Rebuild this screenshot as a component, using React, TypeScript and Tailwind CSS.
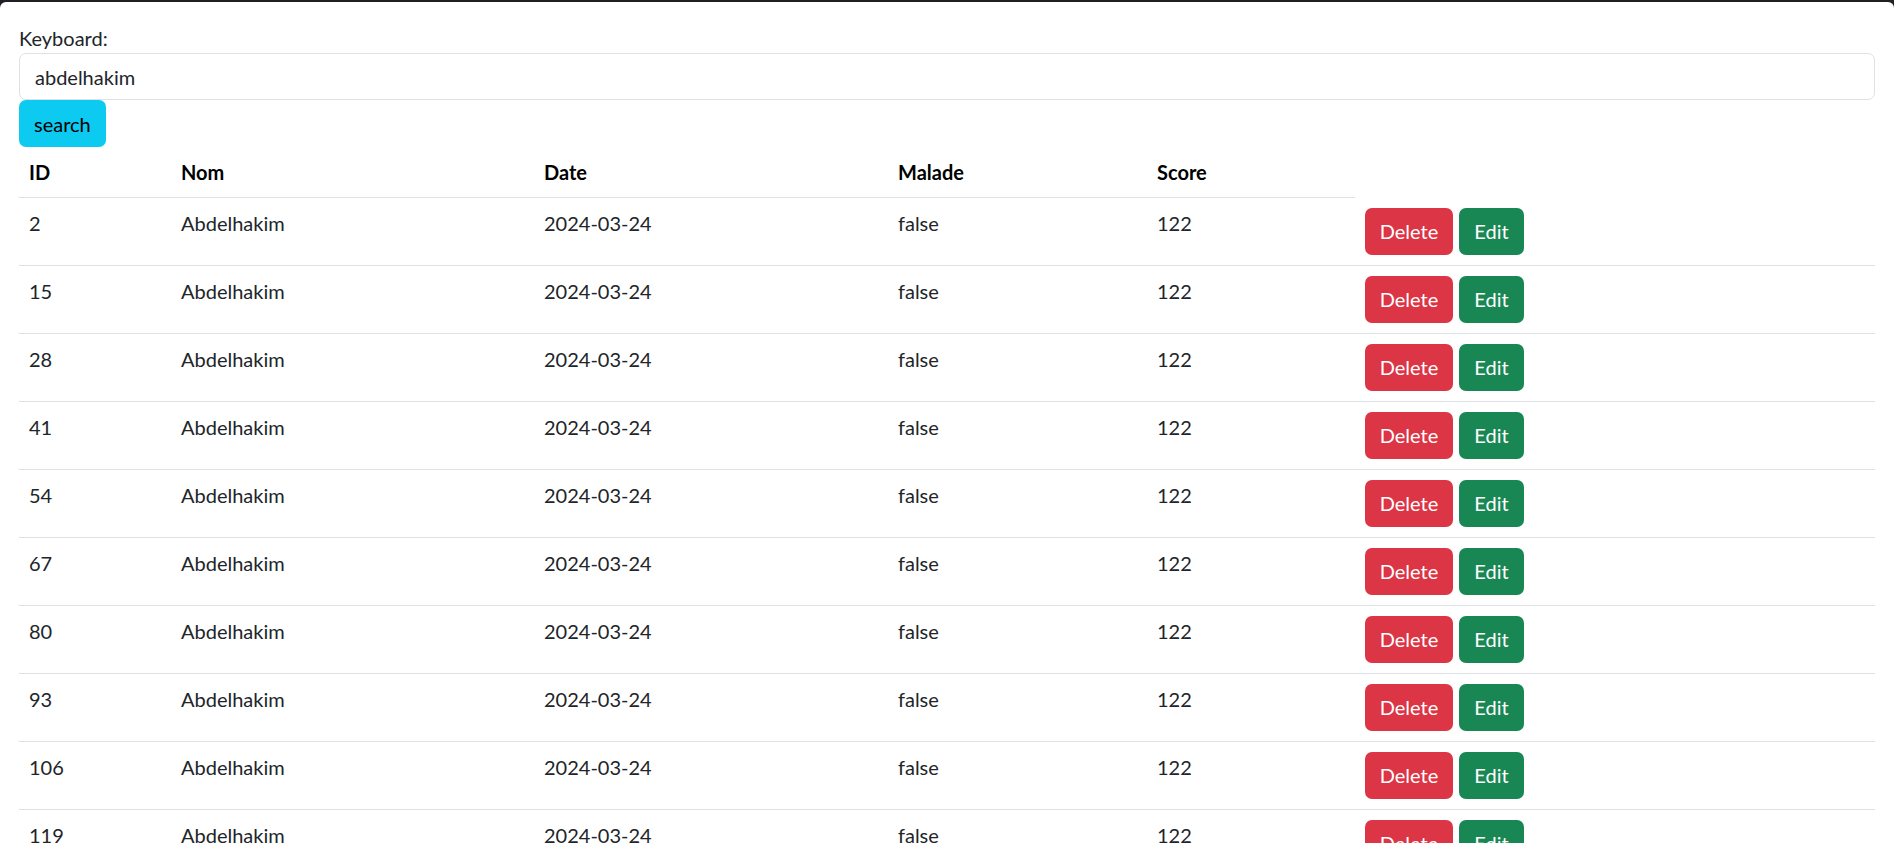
import React from "react";

const rows = Array.from({ length: 12 }, (_, i) => ({
  id: 2 + i * 13,
  nom: "Abdelhakim",
  date: "2024-03-24",
  malade: "false",
  score: 122,
}));

export default function App() {
  return (
    <div className="min-h-screen bg-[#202124] pt-[2px] font-['Lato',sans-serif] text-[20px] leading-[30px] text-[#212529]">
      <div className="min-h-screen rounded-t-[6px] bg-white px-[19px] pt-[21px]">
        {/* search form */}
        <label className="block">Keyboard:</label>
        <input
          defaultValue="abdelhakim"
          className="block h-[47px] w-full rounded-[7px] border border-[#dee2e6] px-[15px] text-[20px] text-[#212529] outline-none"
        />
        <button className="block h-[47px] rounded-[7px] bg-[#0dcaf0] px-[15px] text-black">
          search
        </button>

        {/* results */}
        <table className="w-full table-fixed">
          <colgroup>
            <col className="w-[152px]" />
            <col className="w-[363px]" />
            <col className="w-[354px]" />
            <col className="w-[259px]" />
            <col className="w-[208px]" />
            <col />
          </colgroup>
          <thead>
            <tr className="text-left font-bold text-black">
              <th className="border-b border-[#dee2e6] p-[10px]">ID</th>
              <th className="border-b border-[#dee2e6] p-[10px]">Nom</th>
              <th className="border-b border-[#dee2e6] p-[10px]">Date</th>
              <th className="border-b border-[#dee2e6] p-[10px]">Malade</th>
              <th className="border-b border-[#dee2e6] p-[10px]">Score</th>
              <th />
            </tr>
          </thead>
          <tbody>
            {rows.map((r) => (
              <tr key={r.id} className="border-b border-[#dee2e6] align-top">
                <td className="p-[10px]">{r.id}</td>
                <td className="p-[10px]">{r.nom}</td>
                <td className="p-[10px]">{r.date}</td>
                <td className="p-[10px]">{r.malade}</td>
                <td className="p-[10px]">{r.score}</td>
                <td className="p-[10px]">
                  <div className="flex gap-[6px]">
                    <button className="h-[47px] w-[88px] rounded-[7px] bg-[#dc3545] text-white">
                      Delete
                    </button>
                    <button className="h-[47px] w-[65px] rounded-[7px] bg-[#198754] text-white">
                      Edit
                    </button>
                  </div>
                </td>
              </tr>
            ))}
          </tbody>
        </table>
      </div>
    </div>
  );
}
